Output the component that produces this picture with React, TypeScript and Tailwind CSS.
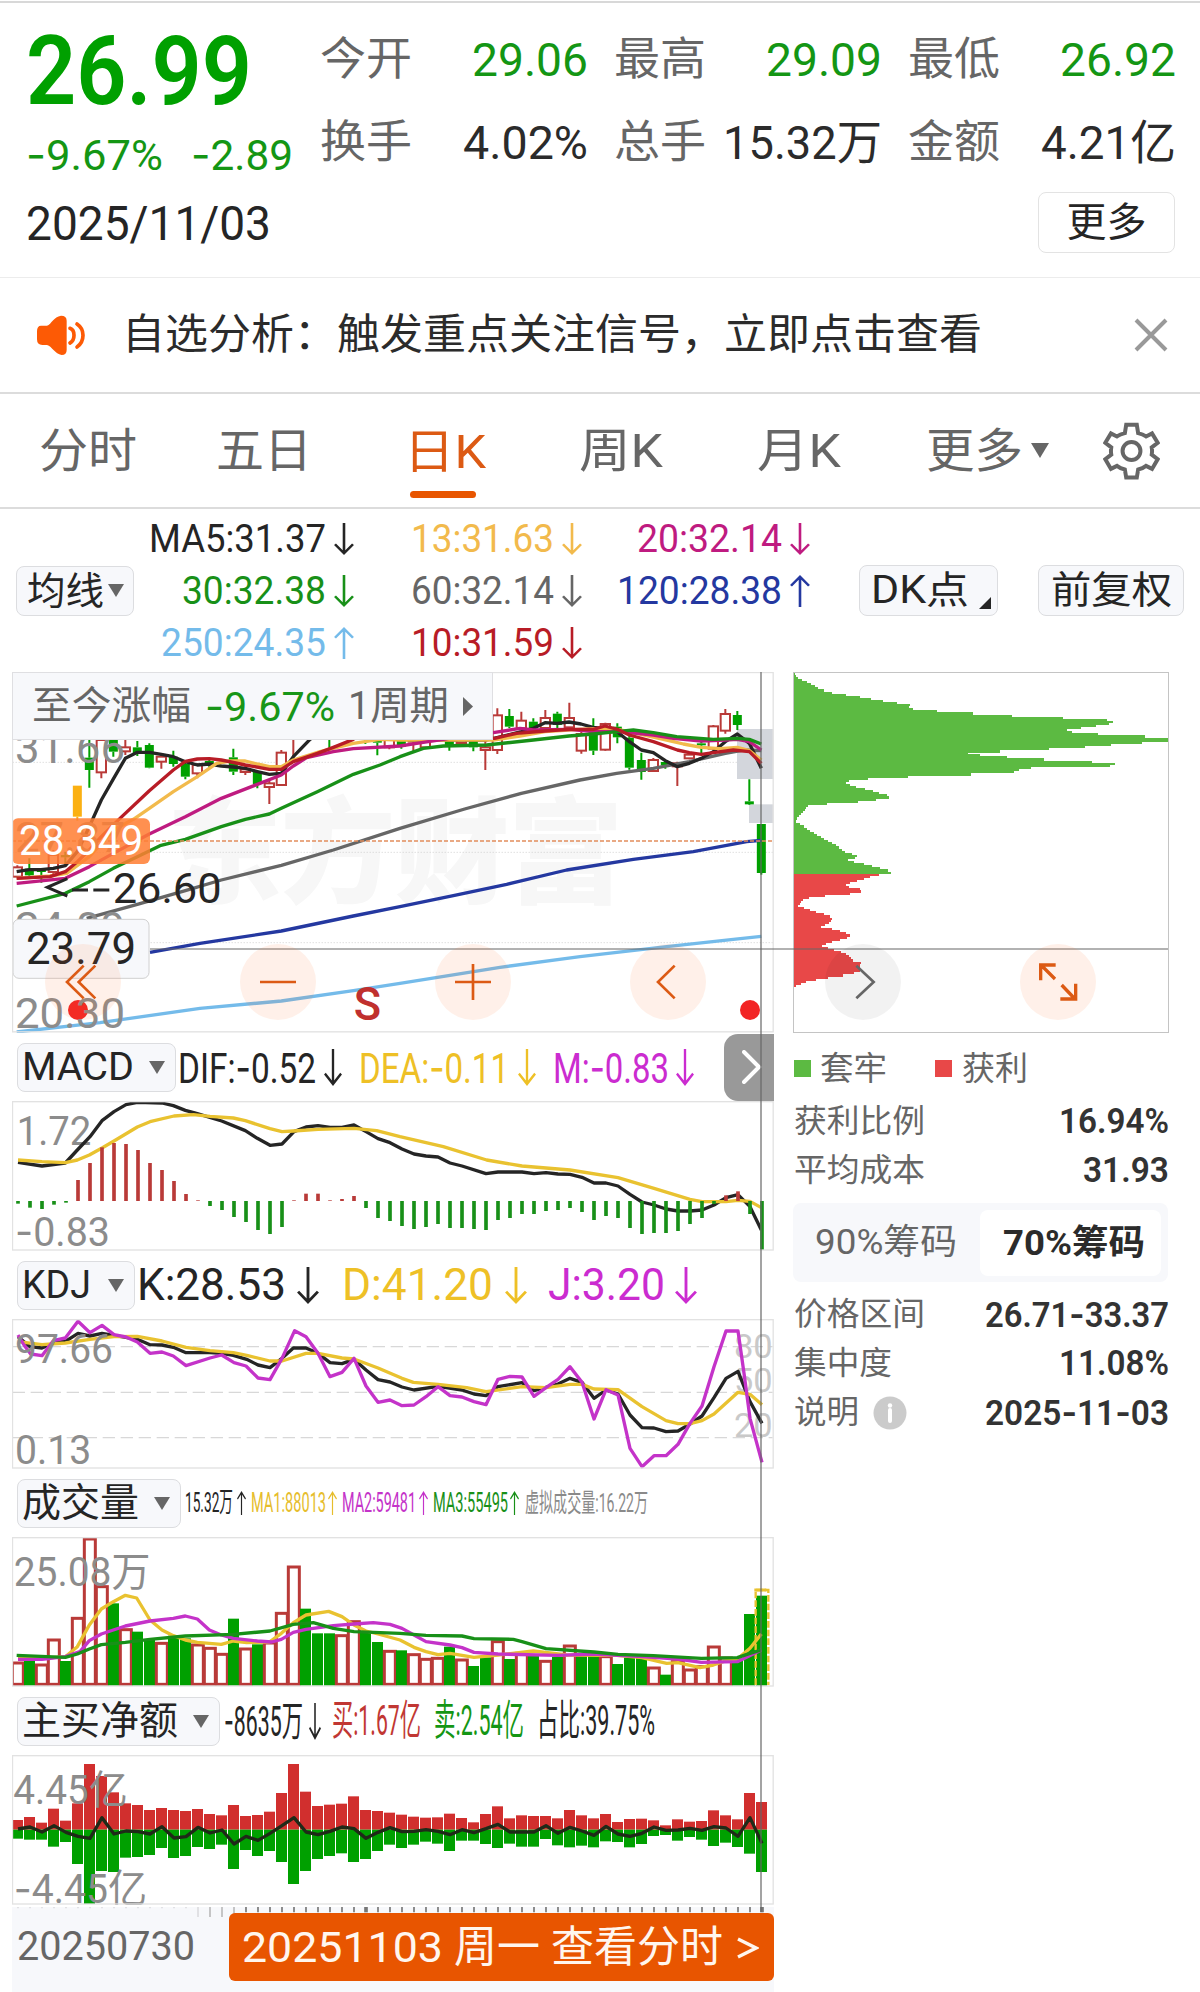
import React, { useLayoutEffect, useRef } from "react";

/* Roboto's hyphen is short; quotes use a wide minus bar. */
function wideHyphens(text: string, Tag: "span" | "tspan") {
  return text.split(/(-)/).map((part, i) =>
    part === "-" ? (
      <Tag key={i} className="font-['Inter']">
        -
      </Tag>
    ) : (
      part
    ),
  );
}

/* Single-line text squeezed or stretched to the width of its box. */
function Fit({ w, className = "", children }: { w: string; className?: string; children: string }) {
  const box = useRef<HTMLSpanElement>(null);
  const ink = useRef<HTMLSpanElement>(null);
  useLayoutEffect(() => {
    if (!box.current || !ink.current) return;
    ink.current.style.transform = "none";
    const natural = ink.current.getBoundingClientRect().width;
    ink.current.style.transform = `scaleX(${box.current.clientWidth / natural})`;
  }, [children]);
  return (
    <span ref={box} className={`inline-block shrink-0 whitespace-nowrap ${w} ${className}`}>
      <span ref={ink} className="inline-block origin-left">
        {wideHyphens(children, "span")}
      </span>
    </span>
  );
}

function Arrow({ up = false, className = "" }: { up?: boolean; className?: string }) {
  return (
    <svg viewBox="0 0 20 36" preserveAspectRatio="none" className={`shrink-0 ${className}`} fill="none" stroke="currentColor" strokeWidth={2.6}>
      <path d={up ? "M10 36V2M1 12L10 2L19 12" : "M10 0V34M1 24L10 34L19 24"} />
    </svg>
  );
}

function Caret({ className = "" }: { className?: string }) {
  return (
    <svg viewBox="0 0 16 13" className={`h-[13px] w-4 shrink-0 ${className}`} preserveAspectRatio="none">
      <path d="M0 0H16L8 13Z" fill="#666" />
    </svg>
  );
}

/* ---------- chart helpers: every plot uses thirds of a pixel ---------- */

const RED = "#b93a38";
const GREEN = "#00a000";
const barX = (i: number) => 54 + 36 * i;

function Line({ d, color, w = 10 }: { d: string; color: string; w?: number }) {
  return <polyline points={d} fill="none" stroke={color} strokeWidth={w} strokeLinejoin="round" />;
}

function Plot({ top, children }: { top: number; children: React.ReactNode }) {
  return (
    <svg viewBox={`36 ${top} 2286 450`} className="block h-[150px] w-[762px]">
      {children}
      <rect x={37.5} y={top + 2} width={2282} height={445} fill="none" stroke="#e2e2e2" strokeWidth={4} />
    </svg>
  );
}

function Label({ x, y, len, size = 126, fill = "#8c8c8c", weight = 400, children }: { x: number; y: number; len: number; size?: number; fill?: string; weight?: number; children: string }) {
  return (
    <text x={x - 5} y={y} fontSize={size} fill={fill} fontWeight={weight} textLength={len + 12} lengthAdjust="spacingAndGlyphs">
      {wideHyphens(children, "tspan")}
    </text>
  );
}

/* index, colour, body top, body bottom, wick top, wick bottom */
type Candle = [number, "r" | "g" | "o", number, number, number, number];
const candles: Candle[] = [
  [0, "r", 622, 650, 616, 655], [1, "g", 626, 646, 595, 655], [2, "g", 628, 636, 624, 668], [3, "r", 585, 636, 570, 642],
  [4, "g", 585, 592, 575, 615], [5, "o", 377, 470, 377, 482], [6, "g", 293, 330, 200, 383], [7, "r", 240, 337, 200, 355],
  [8, "g", 200, 275, 190, 290], [9, "r", 262, 274, 230, 285], [10, "g", 262, 280, 243, 288], [11, "g", 255, 323, 250, 325],
  [12, "r", 290, 305, 280, 326], [13, "g", 290, 312, 272, 320], [14, "g", 312, 350, 305, 358], [15, "r", 315, 340, 310, 355],
  [16, "g", 303, 318, 297, 325], [18, "g", 292, 335, 266, 345], [19, "r", 328, 336, 318, 345], [20, "g", 336, 372, 330, 385],
  [21, "r", 370, 381, 360, 432], [22, "r", 278, 375, 270, 378], [23, "r", 200, 232, 190, 292], [26, "g", 200, 235, 190, 268],
  [29, "g", 200, 240, 200, 252], [30, "g", 238, 248, 200, 286], [31, "r", 220, 262, 200, 268], [32, "g", 230, 260, 200, 266],
  [33, "r", 225, 245, 200, 275], [34, "r", 220, 262, 200, 266], [36, "g", 230, 258, 200, 272], [37, "r", 225, 249, 200, 255],
  [38, "g", 236, 262, 200, 274], [39, "r", 262, 270, 240, 330], [40, "r", 166, 270, 145, 282], [41, "g", 168, 200, 147, 205],
  [42, "r", 182, 205, 155, 210], [43, "g", 185, 205, 175, 212], [44, "r", 174, 204, 150, 208], [45, "g", 161, 195, 155, 205],
  [46, "r", 174, 202, 128, 210], [47, "r", 222, 272, 215, 281], [48, "g", 205, 272, 175, 285], [49, "r", 192, 269, 188, 272],
  [50, "g", 200, 232, 190, 250], [51, "g", 233, 323, 228, 329], [52, "g", 300, 336, 278, 359], [53, "r", 300, 333, 294, 336],
  [54, "g", 306, 316, 300, 326], [55, "r", 310, 319, 305, 378], [56, "r", 284, 295, 278, 298], [57, "g", 250, 256, 240, 282],
  [58, "r", 199, 266, 195, 270], [59, "r", 162, 212, 147, 221], [60, "g", 165, 195, 153, 210], [61, "g", 424, 433, 358, 435],
  [62, "g", 492, 639, 492, 644],
];

const ma: [string, string][] = [
  ["#74bbea", "50,1116 300,1088 600,1045 844,1023 1060,992 1200,970 1500,922 1740,890 2000,860 2200,838 2284,829"],
  ["#2438a0", "450,877 600,850 844,813 1060,768 1200,740 1360,707 1520,673 1700,630 1900,598 2080,575 2180,556 2240,545 2284,541"],
  ["#666666", "260,775 412,733 556,692 664,660 844,616 1000,570 1200,505 1394,447 1564,400 1740,360 1850,340 1960,325 2068,305 2176,280 2230,270 2284,272"],
  ["#252525", "50,635 88,629 123,629 160,625 196,617 232,575 268,500 304,420 341,355 376,295 412,277 448,277 484,283 520,290 556,305 592,315 628,312 664,318 700,321 736,325 772,335 808,343 844,340 880,290 930,238 980,200 1100,230 1240,240 1270,240 1460,240 1494,232 1564,215 1600,205 1635,188 1671,190 1707,186 1743,192 1779,202 1815,205 1852,215 1888,245 1924,270 1960,278 1996,302 2032,320 2068,310 2104,295 2140,275 2176,245 2212,222 2248,250 2284,325"],
  ["#f2ba4c", "50,655 150,648 200,640 268,590 300,555 340,510 400,478 448,445 520,395 592,350 650,310 690,303 736,303 772,312 808,320 844,320 880,300 960,275 1060,250 1140,238 1200,240 1480,240 1560,228 1635,215 1707,210 1800,205 1860,210 1920,222 2000,240 2050,252 2104,262 2160,266 2212,262 2248,272 2284,300"],
  ["#bf1b80", "50,670 196,655 268,620 340,580 448,522 556,470 664,415 772,373 844,345 880,318 920,293 1000,275 1060,266 1200,258 1250,250 1330,238 1400,225 1480,218 1560,205 1600,210 1707,208 1779,215 1860,215 1960,225 2020,235 2104,243 2176,240 2212,238 2248,245 2284,270"],
  ["#189018", "50,738 196,700 268,665 340,625 412,590 480,557 556,538 664,500 736,478 808,462 844,445 952,395 1060,343 1140,315 1200,290 1270,265 1330,258 1460,255 1600,240 1707,228 1780,222 1850,215 1900,210 1960,218 2030,230 2140,238 2212,235 2248,238 2284,252"],
  ["#b81c26", "50,655 150,650 196,635 232,605 268,570 304,530 360,475 448,392 520,330 556,304 592,297 628,296 664,300 736,315 808,328 844,328 880,305 952,280 1000,262 1060,238 1080,220 1484,235 1550,220 1635,213 1707,208 1780,208 1815,198 1852,208 1888,225 1960,245 2032,270 2068,278 2104,283 2140,278 2200,270 2248,275 2284,310"],
];

function PriceChart() {
  return (
    <svg viewBox="36 36 2286 1083" className="block h-[361px] w-[762px]">
      <text x={500} y={702} fontSize={345} fontWeight={900} fill="#f7f7f7" textLength={1370}>东方财富</text>
      {[307, 577, 848].map((y) => (
        <line key={y} x1={38} x2={2320} y1={y} y2={y} stroke="#d0d0d0" strokeWidth={3} strokeDasharray="3 6" />
      ))}
      <rect x={2211} y={207} width={109} height={150} fill="#d3d6dc" />
      <rect x={2247} y={433} width={73} height={56} fill="#d3d6dc" />
      {candles.map(([i, c, t, b, wt, wb]) => {
        const x = 52 + 36 * i;
        const color = c === "r" ? RED : c === "g" ? GREEN : "#fbb012";
        return (
          <g key={i}>
            <path d={`M${x} ${wt}V${t}M${x} ${b}V${wb}`} stroke={color} strokeWidth={6} />
            {c === "r" ? (
              <rect x={x - 14} y={t} width={28} height={b - t} fill="#fff" stroke={color} strokeWidth={6} />
            ) : (
              <rect x={x - 13.5} y={t} width={27} height={b - t} fill={color} />
            )}
          </g>
        );
      })}
      {ma.map(([color, d]) => (
        <Line key={color} d={d} color={color} />
      ))}
      <line x1={36} x2={2320} y1={543} y2={543} stroke="#e28d5c" strokeWidth={4} strokeDasharray="12 6" />
      <circle cx={234} cy={1050} r={30} fill="#f22424" />
      <circle cx={2250} cy={1050} r={30} fill="#f22424" />
      <Label x={50} y={310} len={318}>31.66</Label>
      <Label x={50} y={577} len={318}>27.87</Label>
      <Label x={50} y={845} len={318}>24.09</Label>
      <Label x={50} y={1105} len={318}>20.30</Label>
      <rect x={36} y={475} width={414} height={137} rx={18} fill="#ff7e33" fillOpacity={0.86} />
      <Label x={62} y={584} len={361} fill="#fff">28.349</Label>
      <path d="M202 656L142 682L202 708M216 690H264M280 690H328" stroke="#252525" strokeWidth={9} fill="none" />
      <Label x={343} y={728} len={315} fill="#252525">26.60</Label>
      <rect x={39} y={778} width={408} height={177} rx={18} fill="#f7f8fb" stroke="#d0d0d0" strokeWidth={3} />
      <Label x={83} y={911} len={318} size={132} fill="#252525">23.79</Label>
      <Label x={1066} y={1080} len={70} size={138} fill="#c0302e" weight={500}>S</Label>
      <rect x={37.5} y={37.5} width={2282} height={1078} fill="none" stroke="#e2e2e2" strokeWidth={4} />
    </svg>
  );
}

const macdEnds = [521, 533, 537, 524, 518, 450, 399, 352, 339, 342, 360, 399, 420, 453, 492, 511, 528, 540, 561, 576, 600, 612, 591, 511, 491, 491, 511, 507, 498, 534, 564, 573, 588, 597, 591, 582, 594, 594, 597, 600, 570, 564, 552, 552, 543, 540, 534, 546, 570, 558, 564, 594, 612, 609, 609, 603, 582, 564, 522, 496, 484, 552, 660];

function MacdChart() {
  return (
    <Plot top={213}>
      <Label x={55} y={345} len={212} size={122}>1.72</Label>
      <Label x={50} y={647} len={273} size={122}>-0.83</Label>
      <Line color="#252525" d="54,397 126,408 196,399 232,360 270,320 306,272 342,245 378,224 412,217 486,219 520,227 556,241 592,251 665,273 736,302 772,325 810,346 846,342 882,305 918,291 954,287 990,292 1026,292 1062,285 1098,305 1134,326 1170,338 1206,357 1242,372 1278,378 1314,381 1350,399 1386,408 1458,431 1494,426 1566,426 1602,431 1638,428 1674,432 1710,433 1746,442 1782,459 1818,459 1854,468 1890,493 1926,516 1962,525 1998,537 2034,543 2070,543 2106,540 2142,525 2178,503 2214,494 2250,530 2284,600" />
      <Line color="#e9c230" d="54,390 126,395 196,398 232,390 268,375 306,354 342,333 412,291 450,275 522,258 580,254 630,259 700,264 736,272 810,296 846,305 880,303 954,298 1062,295 1130,302 1200,320 1330,350 1460,390 1566,408 1710,420 1854,443 1962,475 2070,508 2106,515 2178,515 2214,511 2250,514 2284,533" />
      {macdEnds.map((y, i) => (
        <line key={i} x1={barX(i)} x2={barX(i)} y1={513} y2={y} stroke={y < 513 ? RED : "#189018"} strokeWidth={11} />
      ))}
    </Plot>
  );
}

function KdjChart() {
  return (
    <Plot top={867}>
      {[950, 1087, 1223].map((y) => (
        <line key={y} x1={38} x2={2318} y1={y} y2={y} stroke="#d8d8d8" strokeWidth={4} strokeDasharray="37 17" />
      ))}
      <Label x={2207} y={985} len={104} size={98} fill="#c9c9c9">80</Label>
      <Label x={2207} y={1085} len={104} size={98} fill="#c9c9c9">50</Label>
      <Label x={2207} y={1222} len={104} size={98} fill="#c9c9c9">20</Label>
      <Line color="#252525" d="54,920 90,950 126,954 160,940 200,932 234,910 270,918 306,910 342,916 412,928 450,944 486,945 520,952 558,968 630,968 665,970 700,976 740,988 774,1005 810,1013 846,985 880,954 918,954 954,970 990,998 1026,1001 1062,988 1098,1020 1134,1049 1170,1056 1206,1071 1242,1080 1314,1069 1386,1080 1422,1092 1458,1097 1494,1070 1566,1058 1602,1082 1674,1062 1710,1045 1746,1057 1782,1105 1818,1080 1854,1092 1890,1155 1926,1193 1962,1194 1998,1205 2034,1203 2070,1182 2106,1158 2142,1103 2178,1045 2214,1024 2250,1115 2286,1180" />
      <Line color="#e9c230" d="54,935 126,944 196,939 270,928 342,920 412,919 486,933 558,952 630,962 700,968 740,976 810,993 846,993 918,970 954,970 1026,984 1062,987 1134,1014 1206,1045 1240,1057 1314,1063 1400,1073 1458,1085 1566,1070 1638,1073 1710,1063 1746,1063 1782,1077 1854,1079 1926,1130 1998,1172 2034,1181 2070,1181 2106,1172 2142,1152 2214,1087 2250,1093 2286,1124" />
      <Line color="#c433c9" d="54,915 72,945 92,972 126,977 160,932 196,924 234,874 270,908 306,886 342,914 378,921 412,936 450,970 486,966 520,978 558,1007 630,984 665,975 702,998 738,1008 774,1044 810,1049 846,985 884,902 918,920 954,970 990,1040 1026,1027 1062,985 1098,1068 1134,1117 1170,1110 1206,1127 1242,1125 1278,1100 1314,1070 1350,1097 1386,1101 1422,1115 1458,1124 1494,1048 1530,1039 1566,1041 1602,1099 1638,1073 1674,1048 1710,1010 1746,1057 1782,1167 1818,1079 1854,1095 1890,1255 1926,1310 1962,1277 1998,1277 2034,1243 2070,1180 2106,1128 2142,1010 2178,903 2214,903 2232,1030 2250,1165 2286,1297" />
      <Label x={50} y={998} len={282} size={122}>97.66</Label>
      <Label x={50} y={1301} len={217} size={122}>0.13</Label>
    </Plot>
  );
}

const volume = "R577 G572 R583 R508 G573 R443 R205 R348 G400 R477 G485 G508 R518 G497 G505 R523 R533 R551 G446 R535 G523 R517 R428 R289 G416 G490 G490 R495 R453 G485 G516 R542 G541 R552 R566 R563 G530 R568 G588 G562 R513 G567 R548 G558 R572 G560 R526 G555 G557 R558 G582 G563 G563 R592 G614 R573 R598 R588 R529 R562 G565 G432 G377".split(" ");

function VolumeChart() {
  return (
    <Plot top={201}>
      {volume.map((v, i) => {
        const y = Number(v.slice(1));
        return v[0] === "R" ? (
          <rect key={i} x={barX(i) - 17} y={y + 2} width={33} height={641 - y} fill="#fff" stroke={RED} strokeWidth={9} />
        ) : (
          <rect key={i} x={barX(i) - 18} y={y} width={33} height={647 - y} fill={GREEN} />
        );
      })}
      <path d="M2267 645V360H2305V645" fill="none" stroke="#e9c230" strokeWidth={7} strokeDasharray="20 6" />
      <path d="M2263 360H2299" stroke="#e9c230" strokeWidth={9} />
      <Line color="#e9c230" d="54,565 126,565 196,560 232,530 268,465 304,417 340,395 376,376 410,384 450,450 486,480 520,497 556,510 592,517 664,523 700,513 740,518 808,516 844,490 880,458 918,435 986,424 1026,440 1062,465 1098,483 1134,492 1200,510 1242,532 1278,545 1314,554 1350,550 1422,562 1494,555 1600,543 1700,555 1850,556 1926,563 2000,580 2034,578 2100,593 2140,585 2176,573 2212,567 2250,535 2284,492" />
      <Line color="#c433c9" d="54,568 126,568 196,560 240,545 268,512 304,492 376,468 450,453 520,445 556,438 592,447 628,480 664,495 700,505 772,513 815,516 844,508 880,487 918,478 1000,467 1062,462 1120,458 1170,463 1206,475 1242,495 1278,515 1350,525 1386,533 1422,547 1494,552 1674,556 1780,552 1926,560 2034,567 2104,577 2212,575 2284,540" />
      <Line color="#189018" d="50,556 196,562 232,552 268,537 304,524 376,517 450,508 556,498 700,493 810,483 880,463 940,458 1000,475 1062,485 1200,490 1278,496 1386,498 1422,506 1540,508 1566,515 1638,536 1782,546 1854,553 1960,557 2104,565 2212,563 2250,550 2284,540" />
      <Label x={46} y={347} len={398} size={120}>25.08万</Label>
    </Plot>
  );
}

const netFlow: [number, number][] = [
  [1050, 1106], [1041, 1109], [1058, 1109], [1016, 1130], [1052, 1116], [1000, 1182], [882, 1302], [918, 1203], [967, 1206], [1000, 1163], [1005, 1161], [1020, 1155], [1014, 1134], [1020, 1164], [1023, 1158], [1017, 1131],
  [1032, 1137], [1036, 1124], [1005, 1197], [1038, 1140], [1035, 1158], [1025, 1143], [969, 1176], [882, 1242], [965, 1203], [1008, 1167], [1004, 1158], [1001, 1150], [979, 1176], [1020, 1167], [1023, 1143], [1028, 1124],
  [1034, 1134], [1040, 1124], [1043, 1115], [1042, 1121], [1031, 1143], [1044, 1112], [1057, 1112], [1032, 1122], [1009, 1134], [1045, 1121], [1036, 1130], [1038, 1130], [1038, 1107], [1045, 1126], [1020, 1132], [1036, 1127],
  [1045, 1132], [1032, 1114], [1056, 1116], [1047, 1132], [1046, 1122], [1051, 1098], [1066, 1095], [1048, 1112], [1055, 1101], [1053, 1109], [1021, 1128], [1036, 1118], [1048, 1131], [969, 1151], [996, 1206],
];
const netLine = [1077, 1071, 1086, 1067, 1087, 1099, 1105, 1043, 1092, 1083, 1085, 1092, 1070, 1104, 1100, 1072, 1089, 1080, 1122, 1099, 1111, 1090, 1067, 1043, 1086, 1094, 1084, 1071, 1076, 1105, 1087, 1073, 1085, 1084, 1079, 1084, 1094, 1079, 1088, 1076, 1063, 1086, 1086, 1086, 1067, 1090, 1072, 1083, 1096, 1069, 1092, 1099, 1090, 1071, 1081, 1080, 1075, 1081, 1070, 1074, 1099, 1043, 1120];

function NetChart() {
  return (
    <Plot top={855}>
      {netFlow.map(([a, b], i) => (
        <g key={i}>
          <rect x={barX(i) - 18} y={a} width={33} height={1079 - a} fill="#d12f2e" />
          <rect x={barX(i) - 18} y={1079} width={33} height={b - 1079} fill={GREEN} />
        </g>
      ))}
      <Line color="#1f2a18" d={netLine.map((y, i) => `${barX(i)},${y}`).join(" ")} />
      <Label x={45} y={1002} len={331} size={120}>4.45亿</Label>
      <Label x={46} y={1298} len={388} size={120}>-4.45亿</Label>
    </Plot>
  );
}

/* cost distribution outline: y, extent */
const chips: [number, number][] = [
  [37, 42], [55, 55], [70, 90], [85, 115], [95, 140], [102, 185], [108, 230], [115, 265], [122, 305], [128, 345], [135, 390], [141, 385], [148, 400], [155, 480], [161, 590], [167, 700], [173, 850], [180, 998], [190, 998], [198, 950], [206, 890], [213, 845], [220, 900], [226, 1000], [232, 1164], [243, 1164], [250, 1060], [257, 960], [264, 880], [270, 740], [276, 600], [281, 552], [287, 610], [293, 690], [299, 800], [305, 940], [309, 1006], [317, 1006], [322, 800], [326, 690], [331, 725], [337, 700], [342, 590], [348, 400], [353, 300], [358, 215], [367, 195], [378, 220], [390, 270], [400, 300], [408, 330], [414, 325], [420, 270], [427, 210], [432, 110], [436, 85], [485, 43], [500, 72], [530, 120], [560, 175], [575, 195], [582, 220], [590, 238], [598, 212], [602, 198], [610, 240], [622, 290], [634, 333], [639, 333],
  [641, 308], [650, 272], [662, 235], [672, 200], [680, 197], [685, 230], [692, 252], [698, 230], [704, 180], [709, 100], [718, 70], [738, 55], [755, 100], [768, 150], [778, 156], [790, 145], [802, 122], [808, 160], [815, 185], [825, 213], [833, 200], [845, 155], [857, 125], [868, 155], [880, 195], [890, 208], [900, 215], [908, 243], [920, 240], [935, 240], [944, 200], [955, 120], [965, 75], [972, 60], [980, 42],
];
const extent = (y: number) => {
  const k = chips.findIndex((p) => p[0] >= y);
  if (k <= 0) return 42;
  const [y0, x0] = chips[k - 1];
  const [y1, x1] = chips[k];
  return x0 + ((x1 - x0) * (y - y0)) / (y1 - y0);
};
const chipRows = Array.from({ length: 150 }, (_, k) => 38 + k * 6.28);

function ChipChart() {
  return (
    <svg viewBox="39 36 1128 1083" className="block h-[361px] w-[376px]" shapeRendering="crispEdges">
      {chipRows.map((y) => (
        <rect key={y} x={41} y={y} width={Math.max(2, extent(y + 3.1) - 41)} height={7.2} fill={y < 637 ? "#5cba42" : "#e84848"} />
      ))}
      <rect x={41} y={37.5} width={1123} height={1079} fill="none" stroke="#c4c4c4" strokeWidth={3} />
    </svg>
  );
}

function Circle({ gray = false, children }: { gray?: boolean; children: React.ReactNode }) {
  return (
    <span className={`flex size-[76px] items-center justify-center rounded-full ${gray ? "bg-black/5" : "bg-[#ff6a20]/10"}`}>
      <svg viewBox="-57 -57 228 228" className="size-[76px]" fill="none" stroke={gray ? "#666" : "#dc5a14"} strokeWidth={8}>
        {children}
      </svg>
    </span>
  );
}

function Stat({ label, w, value, green = false }: { label: string; w: string; value: string; green?: boolean }) {
  return (
    <div className="flex h-[83px] w-[268px] items-center justify-between leading-[83px]">
      <Fit w="w-[92px]" className="text-[45px] text-[#666]">{label}</Fit>
      <Fit w={w} className={green ? "text-[47px] text-[#149614]" : "text-[47px] text-[#2b2b2b]"}>{value}</Fit>
    </div>
  );
}

function Ma({ w, up = false, color, children }: { w: string; up?: boolean; color: string; children: string }) {
  return (
    <div className={`flex h-[52px] items-center justify-end leading-[52px] ${color}`}>
      <Fit w={w} className="text-[39px]">{children}</Fit>
      <Arrow up={up} className="ml-[8px] h-8 w-5" />
    </div>
  );
}

function PanelHead({ name, nameW, boxW, children }: { name: string; nameW: string; boxW: string; children: React.ReactNode }) {
  return (
    <div className="flex h-[68px] items-center">
      <div className={`ml-[5px] flex h-[49px] shrink-0 items-center justify-between rounded-lg border border-[#dcdde0] bg-[#f7f8fb] pl-[4px] pr-[10px] leading-[47px] ${boxW}`}>
        <Fit w={nameW} className="text-[39px]">{name}</Fit>
        <Caret />
      </div>
      {children}
    </div>
  );
}

function Row({ label, labelW, value, w, info = false }: { label: string; labelW: string; value: string; w: string; info?: boolean }) {
  return (
    <div className="flex h-[49px] items-center leading-[49px]">
      <Fit w={labelW} className="ml-px text-[32px] text-[#666]">{label}</Fit>
      {info && (
        <svg viewBox="0 0 34 34" className="ml-[14px] size-[34px]">
          <circle cx="17" cy="17" r="16.5" fill="#cbcbcb" />
          <path d="M17 14V25" stroke="#fff" strokeWidth="4" strokeLinecap="round" />
          <circle cx="17" cy="9.5" r="2.2" fill="#fff" />
        </svg>
      )}
      <Fit w={w} className="ml-auto text-[35px] font-semibold text-[#333]">{value}</Fit>
    </div>
  );
}

export default function App() {
  return (
    <div className="h-[1992px] w-[1200px] overflow-hidden bg-white font-['Roboto','Noto_Sans_CJK_SC',sans-serif] text-[#252525]">
      {/* quote summary */}
      <header className="h-[278px] border-b border-[#ececec] pt-px">
        <div className="flex h-[191px] border-t-2 border-[#d8d8d8]">
          <div className="w-[320px] pl-[26px] pt-[23px] text-[#00a000]">
            <div className="h-[90px] text-[97px] font-semibold leading-[90px]">
              <Fit w="w-[226px]">26.99</Fit>
            </div>
            <div className="flex h-[76px] gap-[28px] text-[43px] leading-[76px] text-[#149614]">
              <Fit w="w-[137px]">-9.67%</Fit>
              <Fit w="w-[102px]">-2.89</Fit>
            </div>
          </div>
          <div className="grid grid-cols-[268px_268px_268px] content-start gap-x-[26px] pt-[15px]">
            <Stat label="今开" w="w-[116px]" value="29.06" green />
            <Stat label="最高" w="w-[116px]" value="29.09" green />
            <Stat label="最低" w="w-[116px]" value="26.92" green />
            <Stat label="换手" w="w-[125px]" value="4.02%" />
            <Stat label="总手" w="w-[159px]" value="15.32万" />
            <Stat label="金额" w="w-[135px]" value="4.21亿" />
          </div>
        </div>
        <div className="flex h-[61px] items-center justify-between pl-[26px] pr-[25px]">
          <Fit w="w-[245px]" className="pt-[3px] text-[48px] leading-[60px]">2025/11/03</Fit>
          <div className="flex h-[61px] w-[137px] items-center justify-center rounded-lg border border-[#e3e3e3] text-[40px] leading-[58px]">
            <Fit w="w-[80px]">更多</Fit>
          </div>
        </div>
      </header>

      {/* notice */}
      <div className="flex h-[116px] items-center border-b-2 border-[#dcdcdc] pl-[36px] pr-[32px]">
        <svg viewBox="109 100 150 126" className="h-[42px] w-[50px]">
          <path d="M124 135H142C156 130 162 108 184 105Q201 105 201 120V208Q201 223 186 223C166 220 158 198 142 193H128Q112 193 112 176V152Q112 135 124 135Z" fill="#fd5a05" />
          <path d="M211 143Q223 147 223 164Q223 181 211 187M232 130Q250 142 250 164Q250 187 232 199" fill="none" stroke="#fd5a05" strokeWidth="11" strokeLinecap="round" />
        </svg>
        <Fit w="w-[860px]" className="ml-[36px] text-[42px] leading-[114px] text-[#2b2b2b]">自选分析：触发重点关注信号，立即点击查看</Fit>
        <svg viewBox="0 0 34 34" className="ml-auto size-[34px]" stroke="#999" strokeWidth="4">
          <path d="M2 2L32 32M32 2L2 32" />
        </svg>
      </div>

      {/* period tabs */}
      <nav className="flex h-[115px] items-center border-b-2 border-[#dcdcdc] text-[47px] leading-[115px] text-[#666]">
        <Fit w="w-[98px]" className="ml-[39px]">分时</Fit>
        <Fit w="w-[96px]" className="ml-[79px]">五日</Fit>
        <div className="relative ml-[92px] h-[113px] text-[#dc5a14]">
          <Fit w="w-[82px]">日K</Fit>
          <span className="absolute bottom-[9px] left-[6px] h-[7px] w-[66px] rounded-full bg-[#e85500]" />
        </div>
        <Fit w="w-[84px]" className="ml-[93px]">周K</Fit>
        <Fit w="w-[84px]" className="ml-[94px]">月K</Fit>
        <Fit w="w-[97px]" className="ml-[85px]">更多</Fit>
        <svg viewBox="0 0 18 15" className="ml-[8px] h-[15px] w-[18px]">
          <path d="M0 0H18L9 15Z" fill="#666" />
        </svg>
        <svg viewBox="70 65 172 174" className="ml-[54px] h-[58px] w-[57px]" fill="none" stroke="#666" strokeWidth="12">
          <path d="M140 73H172L176 98Q190 101 200 108L218 99L235 127L217 141Q219 152 217 163L235 177L218 206L200 197Q190 205 176 208L172 232H140L136 208Q122 205 112 197L94 206L77 177L95 163Q93 152 95 141L77 127L94 99L112 108Q122 101 136 98Z" />
          <circle cx="156" cy="152" r="27" />
        </svg>
      </nav>

      {/* moving averages */}
      <section className="flex h-[163px] items-center">
        <div className="ml-4 flex h-[50px] w-[118px] items-center justify-between rounded-lg border border-[#dcdde0] bg-[#f7f8fb] pl-[10px] pr-[9px] text-[38px] leading-[46px]">
          <Fit w="w-[77px]">均线</Fit>
          <Caret />
        </div>
        <div className="grid w-[676px] grid-cols-[220px_228px_228px]">
          <Ma w="w-[177px]" color="text-[#252525]">MA5:31.37</Ma>
          <Ma w="w-[143px]" color="text-[#f2ba4c]">13:31.63</Ma>
          <Ma w="w-[145px]" color="text-[#bf1b80]">20:32.14</Ma>
          <Ma w="w-[144px]" color="text-[#189018]">30:32.38</Ma>
          <Ma w="w-[143px]" color="text-[#666666]">60:32.14</Ma>
          <Ma w="w-[165px]" color="text-[#2438a0]" up>120:28.38</Ma>
          <Ma w="w-[165px]" color="text-[#74bbea]" up>250:24.35</Ma>
          <Ma w="w-[143px]" color="text-[#b81c26]">10:31.59</Ma>
        </div>
        <div className="ml-[49px] flex h-[51px] w-[139px] rounded-lg border border-[#dcdde0] bg-[#f7f8fb] pl-[11px] text-[38px] leading-[49px]">
          <Fit w="w-[98px]">DK点</Fit>
          <svg viewBox="0 0 12 12" className="ml-[10px] mt-[31px] size-3">
            <path d="M12 0V12H0Z" fill="#252525" />
          </svg>
        </div>
        <div className="ml-[40px] flex h-[51px] w-[146px] justify-center rounded-lg border border-[#dcdde0] bg-[#f7f8fb] text-[38px] leading-[48px]">
          <Fit w="w-[121px]">前复权</Fit>
        </div>
      </section>

      {/* charts */}
      <main className="relative flex pl-3">
        <div className="w-[762px]">
          <div className="relative">
            <PriceChart />
            <div className="absolute left-0 top-0 flex h-[68px] w-[481px] items-center border border-[#dfdfe2] bg-[#f7f8fb] pl-[19px] text-[39px] leading-[64px] text-[#666]">
              <Fit w="w-[159px]">至今涨幅</Fit>
              <Fit w="w-[130px]" className="ml-[14px] text-[41px] text-[#189618]">-9.67%</Fit>
              <Fit w="w-[101px]" className="ml-[13px]">1周期</Fit>
              <svg viewBox="0 0 10 19" className="ml-[14px] h-[19px] w-[10px]">
                <path d="M0 0L10 9.5L0 19Z" fill="#666" />
              </svg>
            </div>
          </div>

          <PanelHead name="MACD" nameW="w-[112px]" boxW="w-[159px]">
            <div className="ml-[2px] flex w-[550px] items-center text-[43px] leading-[64px]">
              <Fit w="w-[138px]">DIF:-0.52</Fit>
              <Arrow className="ml-[8px] h-[37px] w-[18px]" />
              <div className="ml-[17px] flex items-center text-[#eec026]">
                <Fit w="w-[150px]">DEA:-0.11</Fit>
                <Arrow className="ml-[9px] h-[37px] w-[18px]" />
              </div>
              <div className="ml-[17px] flex items-center text-[#cb2cd0]">
                <Fit w="w-[116px]">M:-0.83</Fit>
                <Arrow className="ml-[7px] h-[37px] w-[18px]" />
              </div>
            </div>
            <div className="-ml-[4px] flex h-[67px] w-[50px] shrink-0 items-center justify-center rounded-l-[14px] bg-[#999]">
              <svg viewBox="0 0 20 34" className="ml-[6px] h-[34px] w-5" fill="none" stroke="#fff" strokeWidth="4" strokeLinecap="round">
                <path d="M2 2L17 17L2 32" />
              </svg>
            </div>
          </PanelHead>
          <MacdChart />

          <PanelHead name="KDJ" nameW="w-[69px]" boxW="w-[118px]">
            <div className="ml-[2px] flex items-center text-[44px] leading-[66px]">
              <Fit w="w-[149px]">K:28.53</Fit>
              <Arrow className="ml-[11px] h-[37px] w-[22px]" />
              <div className="ml-[23px] flex items-center text-[#eec026]">
                <Fit w="w-[151px]">D:41.20</Fit>
                <Arrow className="ml-[12px] h-[37px] w-[22px]" />
              </div>
              <div className="ml-[21px] flex items-center text-[#cb2cd0]">
                <Fit w="w-[117px]">J:3.20</Fit>
                <Arrow className="ml-[10px] h-[37px] w-[22px]" />
              </div>
            </div>
          </PanelHead>
          <KdjChart />

          <PanelHead name="成交量" nameW="w-[117px]" boxW="w-[164px]">
            <div className="ml-[4px] flex items-center text-[28px] leading-[66px]">
              <Fit w="w-[48px]">15.32万</Fit>
              <Arrow up className="ml-[4px] h-[24px] w-[9px]" />
              <div className="ml-[5px] flex items-center text-[#e6bd2c]">
                <Fit w="w-[75px]">MA1:88013</Fit>
                <Arrow up className="ml-[2px] h-[24px] w-[9px]" />
              </div>
              <div className="ml-[5px] flex items-center text-[#c433c9]">
                <Fit w="w-[74px]">MA2:59481</Fit>
                <Arrow up className="ml-[3px] h-[24px] w-[9px]" />
              </div>
              <div className="ml-[5px] flex items-center text-[#189018]">
                <Fit w="w-[75px]">MA3:55495</Fit>
                <Arrow up className="ml-[2px] h-[24px] w-[9px]" />
              </div>
              <Fit w="w-[123px]" className="ml-[6px] text-[26px] text-[#8a8a8a]">虚拟成交量:16.22万</Fit>
            </div>
          </PanelHead>
          <VolumeChart />

          <PanelHead name="主买净额" nameW="w-[156px]" boxW="w-[203px]">
            <div className="ml-[4px] flex items-center text-[42px] leading-[66px]">
              <Fit w="w-[79px]">-8635万</Fit>
              <Arrow className="ml-[6px] h-[37px] w-[12px]" />
              <Fit w="w-[89px]" className="ml-[11px] text-[#c13733]">买:1.67亿</Fit>
              <Fit w="w-[90px]" className="ml-[13px] text-[#149614]">卖:2.54亿</Fit>
              <Fit w="w-[118px]" className="ml-[13px]">占比:39.75%</Fit>
            </div>
          </PanelHead>
          <NetChart />

          <footer className="mt-[2px] h-[85px] bg-[#f7f8fb]">
            <svg viewBox="36 1311 2286 18" className="block h-[6px] w-[762px] overflow-visible">
              {netLine.map((_, i) => (
                <line
                  key={i}
                  x1={barX(i)}
                  x2={barX(i)}
                  y1={1311}
                  y2={i < 15 ? 1315 : i < 19 ? 1341 : 1327}
                  stroke={i < 16 ? "#dddddf" : i < 19 ? "#bbb" : "#777"}
                  strokeWidth={i === 29 || i === 62 ? 11 : 5}
                />
              ))}
            </svg>
            <div className="flex items-center">
              <Fit w="w-[178px]" className="ml-[5px] text-[40px] leading-[68px] text-[#666]">20250730</Fit>
              <div className="ml-[34px] flex h-[68px] w-[545px] items-center rounded-[6px] bg-[#e85500] pl-[13px] text-[43px] leading-[67px] text-[#fff6ee]">
                <Fit w="w-[201px]">20251103</Fit>
                <Fit w="w-[86px]" className="ml-[11px]">周一</Fit>
                <Fit w="w-[172px]" className="ml-[11px]">查看分时</Fit>
                <svg viewBox="0 0 22 22" className="ml-[14px] mt-[2px] size-[22px]" fill="none" stroke="currentColor" strokeWidth="3.4">
                  <path d="M1 2L19 11L1 20" />
                </svg>
              </div>
            </div>
          </footer>
        </div>

        {/* cost distribution */}
        <aside className="ml-[19px] w-[376px]">
          <ChipChart />
          <div className="flex h-[64px] items-center pt-[6px] text-[33px] leading-[57px] text-[#666]">
            <span className="ml-px size-[17px] bg-[#5cba42]" />
            <Fit w="w-[67px]" className="ml-[9px]">套牢</Fit>
            <span className="ml-[48px] size-[17px] bg-[#e84848]" />
            <Fit w="w-[66px]" className="ml-[10px]">获利</Fit>
          </div>
          <Row label="获利比例" labelW="w-[131px]" value="16.94%" w="w-[110px]" />
          <Row label="平均成本" labelW="w-[131px]" value="31.93" w="w-[86px]" />
          <div className="mt-[8px] flex h-[79px] w-[375px] items-center rounded-lg bg-[#f7f8fb] pl-[22px] pr-[7px] text-[35px] leading-[68px]">
            <Fit w="w-[142px]" className="text-[#666]">90%筹码</Fit>
            <div className="ml-auto flex h-[66px] w-[181px] justify-center rounded-lg bg-white pl-[6px] font-bold text-[#2b2b2b]">
              <Fit w="w-[142px]">70%筹码</Fit>
            </div>
          </div>
          <div className="mt-[8px]">
            <Row label="价格区间" labelW="w-[131px]" value="26.71-33.37" w="w-[184px]" />
            <Row label="集中度" labelW="w-[98px]" value="11.08%" w="w-[110px]" />
            <Row label="说明" labelW="w-[65px]" value="2025-11-03" w="w-[184px]" info />
          </div>
        </aside>

        {/* crosshair and floating controls */}
        <div className="pointer-events-none absolute left-[760px] top-0 h-[1240px] w-[2px] bg-[#666]/60" />
        <div className="pointer-events-none absolute left-[150px] top-[276px] h-[2px] w-[1018px] bg-[#666]/50" />
        <div className="absolute left-[45px] top-[272px] flex gap-[119px]">
          <Circle>
            <path d="M59 8L9 57L59 106M94 8L44 57L94 106" />
          </Circle>
          <Circle>
            <path d="M3 57H111" />
          </Circle>
          <Circle>
            <path d="M3 57H111M57 3V111" />
          </Circle>
          <Circle>
            <path d="M77 8L27 57L77 106" />
          </Circle>
          <Circle gray>
            <path d="M37 8L89 57L37 106" />
          </Circle>
          <Circle>
            <path d="M5 52V6H50M6 6L48 48M110 62V108H64M68 66L108 108" strokeWidth={10} />
          </Circle>
        </div>
      </main>
    </div>
  );
}
